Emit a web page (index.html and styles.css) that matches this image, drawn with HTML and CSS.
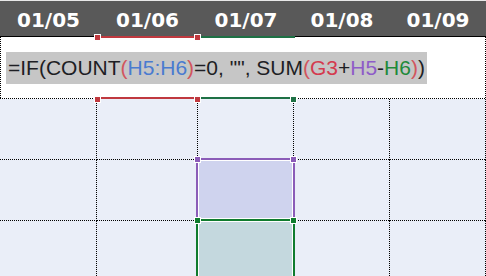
FILE: index.html
```html
<!DOCTYPE html>
<html lang="en">
<head>
    <meta charset="UTF-8">
    <title>Formula ranges</title>
    <link rel="stylesheet" href="styles.css">
</head>
<body>
    <div class="sheet">
        <div class="head">
            <span>01/05</span>
            <span>01/06</span>
            <span>01/07</span>
            <span>01/08</span>
            <span>01/09</span>
        </div>

        <!-- formula shown over the cell -->
        <div class="popup">
            <span class="formula">=IF(COUNT<span class="c-paren">(</span><span class="c-blue">H5:H6</span><span class="c-paren">)</span>=0, "", SUM<span class="c-paren">(</span><span class="c-red">G3</span>+<span class="c-purple">H5</span>-<span class="c-green">H6</span><span class="c-paren">)</span>)</span>
        </div>

        <div class="row">
            <div></div><div></div><div></div><div></div><div></div>
        </div>
        <div class="row">
            <div></div><div></div><div></div><div></div><div></div>
        </div>
        <div class="row">
            <div></div><div></div><div></div><div></div><div></div>
        </div>

        <!-- reference range outlines -->
        <div class="range teal">
            <i class="knob br"></i>
        </div>
        <div class="range red">
            <i class="knob tl"></i>
            <i class="knob tr"></i>
            <i class="knob bl"></i>
            <i class="knob br"></i>
        </div>
        <div class="range purple">
            <i class="knob tl"></i>
            <i class="knob tr"></i>
        </div>
        <div class="range green">
            <i class="knob tl"></i>
            <i class="knob tr"></i>
        </div>
    </div>
</body>
</html>
```

FILE: styles.css
```css
body {
    margin: 0;
    background: #fff;
    font-family: "Liberation Sans", Arial, sans-serif;
}

.sheet {
    position: relative;
    width: 486px;
    height: 276px;
    overflow: hidden;
    background: #eaeef8;
}

.head {
    display: grid;
    grid-template-columns: 97px 101px 96px 96px 96px;
    height: 37px;
    box-sizing: border-box;
    background: #595959;
    border-top: 1px solid #e8e8e8;
    border-bottom: 1px solid #000;
}

.head span {
    color: #fff;
    font: bold 20px "DejaVu Sans", sans-serif;
    text-align: center;
    line-height: 32px;
    padding-top: 3px;
}

/* 1px dotted lines drawn as gradients so the dots stay crisp black */
.popup {
    height: 62px;
    box-sizing: border-box;
    padding: 15px 0 0 6px;
    background:
        repeating-linear-gradient(to bottom, #000 0 1px, transparent 1px 2px) left top / 1px 100% no-repeat,
        repeating-linear-gradient(to bottom, #000 0 1px, transparent 1px 2px) right top / 1px 100% no-repeat,
        repeating-linear-gradient(to right, #000 0 1px, transparent 1px 2px) left bottom / 100% 1px no-repeat,
        #fff;
}

.formula {
    display: inline-block;
    background: #c6c6c6;
    color: #1e1e24;
    font-size: 21px;
    line-height: 32px;
    padding: 0 2px;
    white-space: nowrap;
}

.c-paren { color: #d2555e; }
.c-blue { color: #4a7bd0; }
.c-red { color: #d43a4e; }
.c-purple { color: #8e5cc8; }
.c-green { color: #1f8a3a; }

.row {
    display: grid;
    grid-template-columns: 97px 101px 96px 96px 96px;
    height: 61px;
}

.row div {
    background:
        repeating-linear-gradient(to bottom, #000 0 1px, transparent 1px 2px) right top / 1px 100% no-repeat,
        repeating-linear-gradient(to right, #000 0 1px, transparent 1px 2px) left bottom / 100% 1px no-repeat;
}

.range {
    position: absolute;
    box-sizing: border-box;
}

.knob {
    position: absolute;
    width: 5px;
    height: 5px;
    background: currentColor;
    border: 1px solid #fff;
}

.knob.tl { top: -4px; left: -4px; }
.knob.tr { top: -4px; right: -4px; }

.red {
    left: 96px;
    top: 36px;
    width: 102px;
    height: 63px;
    color: #c0393f;
    border-top: 2px solid #c0393f;
    border-bottom: 2px solid #c0393f;
}

.red .tl { left: -2px; }
.red .tr { right: -3px; }
.red .bl { left: -2px; bottom: -6px; }
.red .br { right: -3px; bottom: -6px; }

.teal {
    left: 198px;
    top: 36px;
    width: 97px;
    height: 63px;
    color: #1e7145;
    border-top: 2px solid #1e7145;
    border-bottom: 2px solid #1e7145;
}

.teal .br { right: -2px; bottom: -6px; }

.purple {
    left: 196px;
    top: 158px;
    width: 99px;
    height: 63px;
    color: #8b5cb8;
    border: 2px solid #8b5cb8;
    background: #cfd3ee;
    box-shadow: inset 0 0 0 1px #fff;
}

.green {
    left: 196px;
    top: 219px;
    width: 99px;
    height: 80px;
    color: #107c2e;
    border: 2px solid #107c2e;
    background: #c4d8de;
    box-shadow: inset 0 0 0 1px #fff;
}
```
